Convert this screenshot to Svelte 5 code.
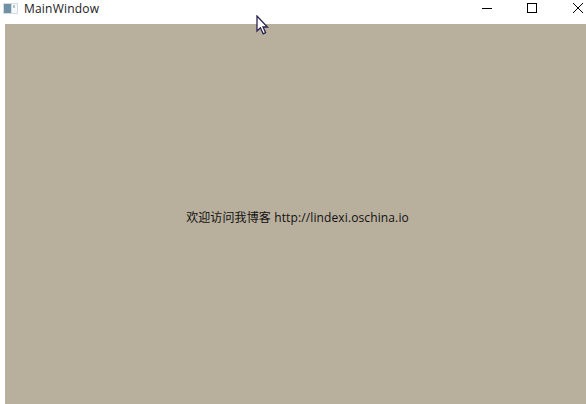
<script>
  const title = "MainWindow";
  const message = "欢迎访问我博客 http://lindexi.oschina.io";
</script>

<div class="window">
  <header class="titlebar">
    <svg class="app-icon" width="15" height="16" viewBox="0 0 15 16">
      <rect x="0" y="3" width="15" height="11" fill="#d3dce2" />
      <rect x="1" y="4" width="7" height="9" fill="#6f90a5" />
      <rect x="9" y="4" width="5" height="9" fill="#f6f8f9" />
      <rect x="10" y="5" width="2" height="3" fill="#b4c2cc" />
    </svg>
    <span class="title">{title}</span>
    <div class="controls">
      <svg class="control" width="46" height="16" viewBox="0 0 46 16">
        <path d="M20 8.5h10" stroke="#000" fill="none" />
      </svg>
      <svg class="control" width="46" height="16" viewBox="0 0 46 16">
        <rect x="19.5" y="3.5" width="9" height="9" stroke="#000" fill="none" />
      </svg>
      <svg class="control last" width="46" height="16" viewBox="0 0 46 16">
        <path d="M19 3l10 10M29 3l-10 10" stroke="#000" fill="none" />
      </svg>
    </div>
  </header>
  <main class="content">
    <p>{message}</p>
  </main>
  <svg class="cursor" width="14" height="21" viewBox="0 0 14 21">
    <path d="M1 1v15l3.4-3.2 2.8 6 2.4-1.1-2.6-5.7h4.4z" fill="#fff" stroke="#2a2350" stroke-width="1.3" />
  </svg>
</div>

<style>
  :global(body) {
    margin: 0;
    background: #fff;
  }

  .window {
    position: relative;
    width: 586px;
    height: 404px;
    overflow: hidden;
    display: flex;
    flex-direction: column;
  }

  .titlebar {
    height: 24px;
    flex: none;
    display: flex;
    align-items: flex-start;
    box-sizing: border-box;
    padding: 0 0 0 3px;
  }

  .app-icon {
    margin-right: 6px;
  }

  .title {
    font-family: "Open Sans", "Liberation Sans", sans-serif;
    font-size: 12px;
    line-height: 18px;
    letter-spacing: 0.2px;
    color: #1a1a1a;
  }

  .controls {
    margin-left: auto;
    display: flex;
  }

  .control.last {
    margin-right: -14px;
  }

  .content {
    flex: 1;
    margin-left: 5px;
    padding: 8px 0 0 4px;
    background: #b8af9d;
    display: flex;
    align-items: center;
    justify-content: center;
  }

  p {
    margin: 0;
    font-size: 12px;
    line-height: 16px;
    letter-spacing: 0.12px;
    color: #111;
    white-space: nowrap;
    font-family: "Open Sans", "Noto Sans CJK SC", sans-serif;
  }

  .cursor {
    position: absolute;
    left: 256px;
    top: 15px;
  }
</style>
